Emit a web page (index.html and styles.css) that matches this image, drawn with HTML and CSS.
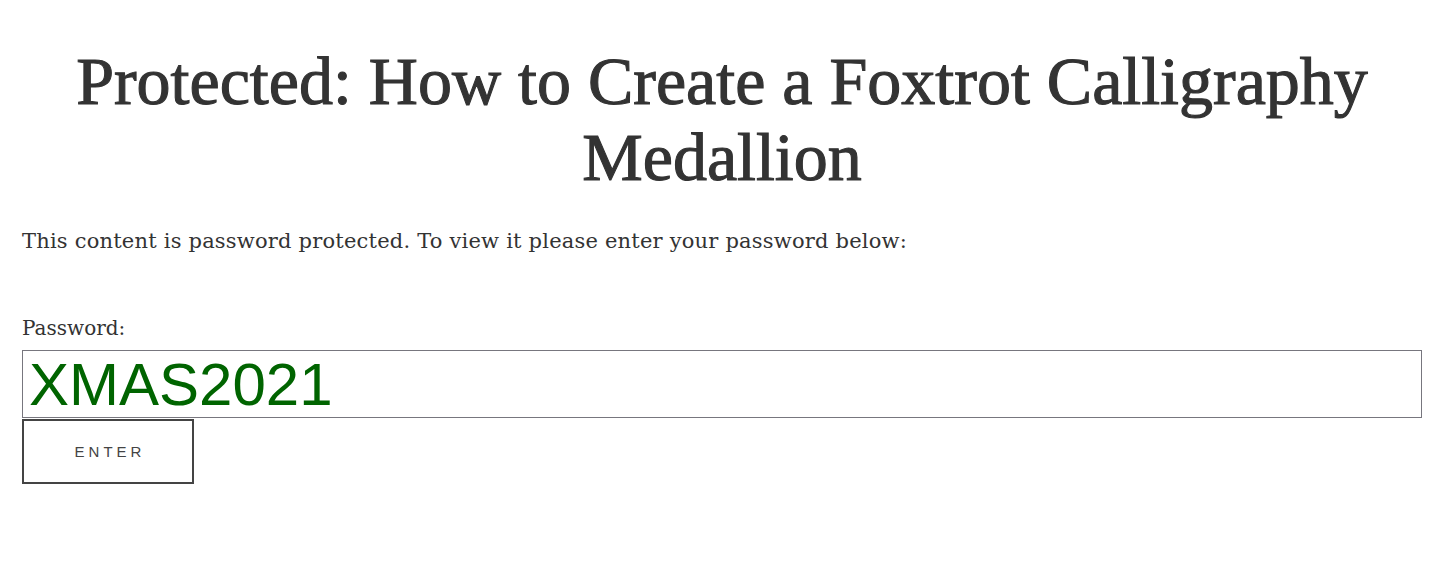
FILE: index.html
```html
<!DOCTYPE html>
<html lang="en">
<head>
    <meta charset="UTF-8">
    <title>Protected: How to Create a Foxtrot Calligraphy Medallion</title>
    <link rel="stylesheet" href="styles.css">
</head>
<body>
<h1 class="entry-title">Protected: How to Create a Foxtrot Calligraphy Medallion</h1>
<form class="post-password-form" action="javascript:void(0);" method="POST">
    <p class="intro">This content is password protected. To view it please enter your password below:</p>
    <p class="field">
        <label for="pwbox">Password:</label>
        <input type="text" id="pwbox" name="post_password" value="XMAS2021">
    </p>
    <input type="submit" value="Enter">
</form>
</body>
</html>
```

FILE: styles.css
```css
body {
    margin: 0;
    padding: 0 18px 0 22px;
    background: #fff;
    color: #333;
    font-family: "DejaVu Serif", serif;
}

.entry-title {
    margin: 43px 0 0;
    text-align: center;
    font-family: "Liberation Serif", serif;
    font-size: 68px;
    font-weight: normal;
    line-height: 76px;
    color: #333;
    -webkit-text-stroke: 1.1px #333;
}

.intro {
    margin: 31px 0 0;
    font-size: 21px;
    letter-spacing: 0.2px;
    line-height: 30px;
}

.field {
    margin: 58px 0 0;
}

label {
    display: block;
    font-size: 20px;
    line-height: 28px;
    margin-bottom: 8px;
}

input[type=text] {
    display: block;
    width: 100%;
    height: 68px;
    box-sizing: border-box;
    border: 1px solid #77767e;
    padding: 0 6px;
    font-family: "Liberation Sans", sans-serif;
    font-size: 60px;
    color: #006400;
    outline: none;
}

input[type=submit] {
    display: block;
    width: 172px;
    height: 65px;
    margin-top: 1px;
    border: 2px solid #444;
    background: #fff;
    font-family: "Liberation Sans", sans-serif;
    font-size: 15px;
    letter-spacing: 4px;
    text-indent: 4px;
    text-transform: uppercase;
    color: #444;
    cursor: pointer;
}
```
